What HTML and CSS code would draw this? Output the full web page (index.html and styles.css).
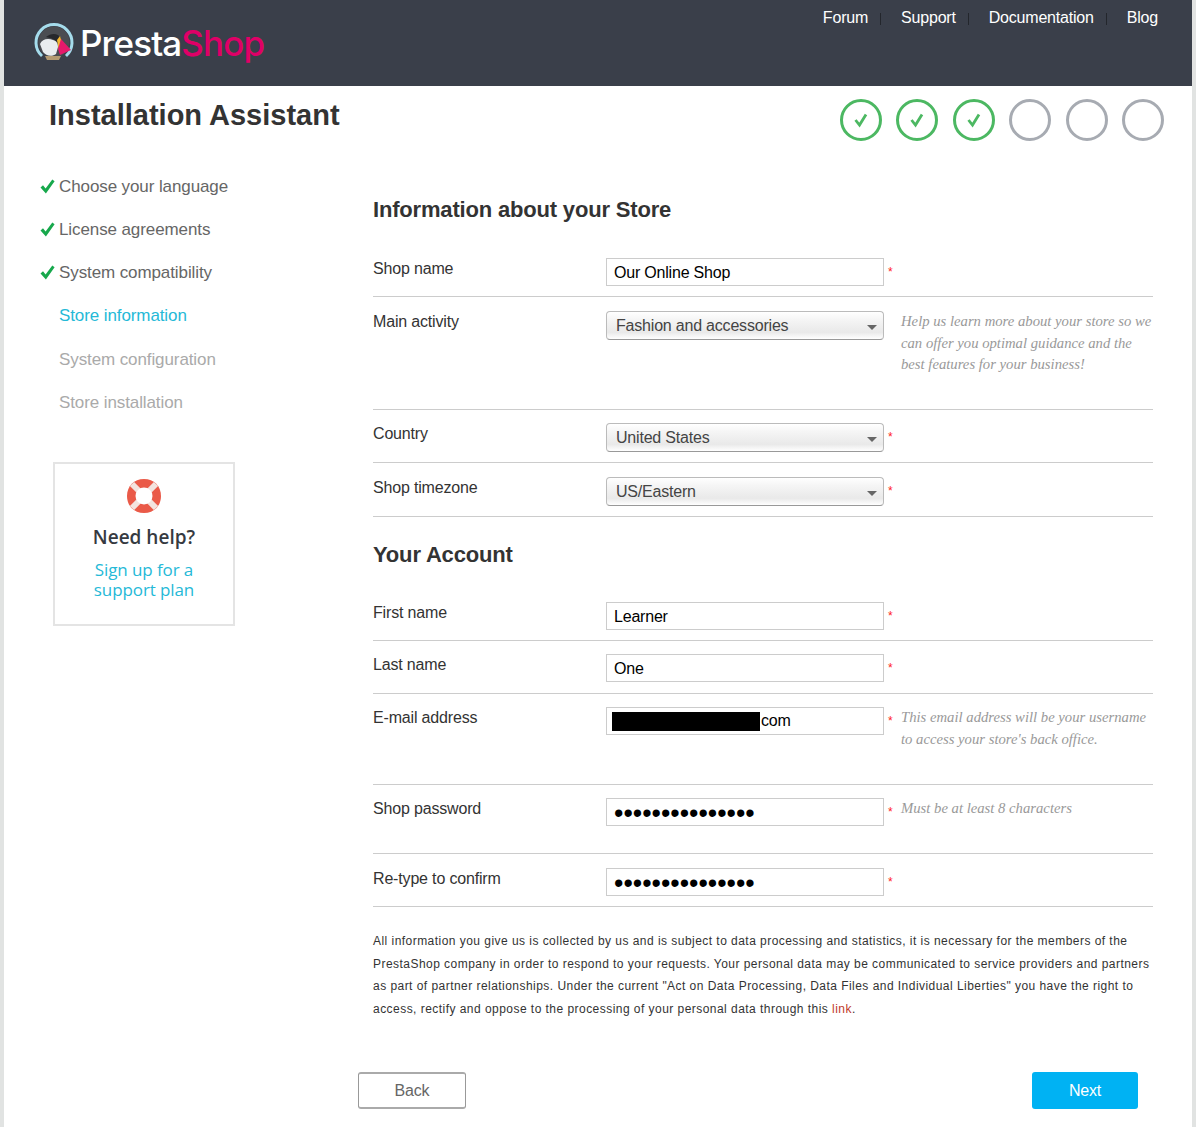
FILE: index.html
```html
<!DOCTYPE html>
<html lang="en">
<head>
<meta charset="utf-8">
<title>PrestaShop Installation Assistant</title>
<link rel="stylesheet" href="styles.css">
</head>
<body>
<div class="page">
  <header class="topbar">
    <a class="logo" href="#">
      <svg class="logo-icon" width="40" height="40" viewBox="0 0 40 40" aria-hidden="true">
        <path d="M8 33 A18 18 0 1 1 32 33" fill="none" stroke="#a5dcec" stroke-width="3"/>
        <circle cx="20" cy="19" r="15.5" fill="#4a4d52"/>
        <path d="M6 21 C8 16 14 15 19 17 C23 18 24 21 24 24 L22 31 C18 34 12 33 9 29 Z" fill="#e9ecef"/>
        <path d="M12 14 C17 10 24 10 27 15 L24 20 C22 17 17 15 12 14 Z" fill="#26282c"/>
        <path d="M23 17 L26 13 L28 20 L25 27 Z" fill="#f2b632"/>
        <path d="M27 16 L37 27 L26 32 L24 26 Z" fill="#e6196b"/>
        <path d="M11 33 H27 L25 37 H13 Z" fill="#b49a72"/>
      </svg>
      <span class="logo-text"><span class="logo-presta">Presta</span><span class="logo-shop">Shop</span></span>
    </a>
    <nav class="topnav">
      <a href="#">Forum</a>
      <a href="#">Support</a>
      <a href="#">Documentation</a>
      <a href="#">Blog</a>
    </nav>
  </header>

  <div class="titlebar">
    <h1>Installation Assistant</h1>
    <div class="steps">
      <span class="step done"><svg width="16" height="16" viewBox="0 0 16 16"><path d="M2.5 8 L6.5 13 L13 2.5" fill="none" stroke="#4cb862" stroke-width="2.8"/></svg></span>
      <span class="step done"><svg width="16" height="16" viewBox="0 0 16 16"><path d="M2.5 8 L6.5 13 L13 2.5" fill="none" stroke="#4cb862" stroke-width="2.8"/></svg></span>
      <span class="step done"><svg width="16" height="16" viewBox="0 0 16 16"><path d="M2.5 8 L6.5 13 L13 2.5" fill="none" stroke="#4cb862" stroke-width="2.8"/></svg></span>
      <span class="step"></span>
      <span class="step"></span>
      <span class="step"></span>
    </div>
  </div>

  <div class="content">
    <aside class="sidebar">
      <ul class="menu">
        <li class="finished"><svg class="tick" width="15" height="15" viewBox="0 0 15 15"><path d="M0.5 8.5 L3 6.3 L5.6 9.4 L12.3 0.5 L14.6 2.2 L5.9 14.6 Z" fill="#17a84c"/></svg>Choose your language</li>
        <li class="finished"><svg class="tick" width="15" height="15" viewBox="0 0 15 15"><path d="M0.5 8.5 L3 6.3 L5.6 9.4 L12.3 0.5 L14.6 2.2 L5.9 14.6 Z" fill="#17a84c"/></svg>License agreements</li>
        <li class="finished"><svg class="tick" width="15" height="15" viewBox="0 0 15 15"><path d="M0.5 8.5 L3 6.3 L5.6 9.4 L12.3 0.5 L14.6 2.2 L5.9 14.6 Z" fill="#17a84c"/></svg>System compatibility</li>
        <li class="current">Store information</li>
        <li class="todo">System configuration</li>
        <li class="todo">Store installation</li>
      </ul>
      <div class="helpbox">
        <svg class="buoy" width="36" height="36" viewBox="0 0 36 36" aria-hidden="true">
          <path d="M18 1 C28 1 35 8 35 18 C35 28 28 35 18 35 C8 35 1 28 1 18 C1 8 8 1 18 1 Z" fill="#ea5a48"/>
          <path d="M6 6 L14 14 M30 6 L22 14 M6 30 L14 22 M30 30 L22 22" stroke="#f3e4df" stroke-width="6"/>
          <circle cx="18" cy="18" r="8.5" fill="#fff"/>
        </svg>
        <div class="help-title">Need help?</div>
        <a class="help-link" href="#">Sign up for a<br>support plan</a>
      </div>
    </aside>

    <main class="main">
      <h2>Information about your Store</h2>
      <div class="row">
        <label>Shop name</label>
        <input class="field" type="text" value="Our Online Shop">
        <span class="req">*</span>
      </div>
      <div class="row row-activity">
        <label>Main activity</label>
        <div class="selectbox"><select><option>Fashion and accessories</option></select></div>
        <span class="req"></span>
        <p class="hint">Help us learn more about your store so we can offer you optimal guidance and the best features for your business!</p>
      </div>
      <div class="row row-tight">
        <label>Country</label>
        <div class="selectbox"><select><option>United States</option></select></div>
        <span class="req">*</span>
      </div>
      <div class="row">
        <label>Shop timezone</label>
        <div class="selectbox"><select><option>US/Eastern</option></select></div>
        <span class="req">*</span>
      </div>

      <h2 class="second">Your Account</h2>
      <div class="row">
        <label>First name</label>
        <input class="field" type="text" value="Learner">
        <span class="req">*</span>
      </div>
      <div class="row row-tight">
        <label>Last name</label>
        <input class="field" type="text" value="One">
        <span class="req">*</span>
      </div>
      <div class="row row-tight row-email">
        <label>E-mail address</label>
        <div class="field field-email"><span class="redact"></span>com</div>
        <span class="req">*</span>
        <p class="hint">This email address will be your username to access your store's back office.</p>
      </div>
      <div class="row row-tight row-pass">
        <label>Shop password</label>
        <input class="field field-pass" type="password" value="aaaaaaaaaaaaaaa">
        <span class="req">*</span>
        <p class="hint">Must be at least 8 characters</p>
      </div>
      <div class="row">
        <label>Re-type to confirm</label>
        <input class="field field-pass" type="password" value="aaaaaaaaaaaaaaa">
        <span class="req">*</span>
      </div>

      <p class="legal">All information you give us is collected by us and is subject to data processing and statistics, it is necessary for the members of the PrestaShop company in order to respond to your requests. Your personal data may be communicated to service providers and partners as part of partner relationships. Under the current "Act on Data Processing, Data Files and Individual Liberties" you have the right to access, rectify and oppose to the processing of your personal data through this <a href="#">link</a>.</p>

      <div class="actions">
        <button class="btn btn-back" type="button">Back</button>
        <button class="btn btn-next" type="button">Next</button>
      </div>
    </main>
  </div>
</div>
</body>
</html>
```

FILE: styles.css
```css
* { box-sizing: border-box; }
html, body { margin: 0; padding: 0; }
body {
  background: #e1e3e2;
  font-family: "Liberation Sans", Arial, sans-serif;
  color: #333;
  height: 1127px;
  overflow: hidden;
}
.page {
  margin: 0 4px;
  height: 1127px;
  background: #fff;
}

/* header */
.topbar {
  height: 86px;
  background: #3a3f4a;
  display: flex;
  justify-content: space-between;
  position: relative;
}
.logo {
  display: flex;
  align-items: center;
  padding: 0 0 0 30px;
  text-decoration: none;
  height: 86px;
}
.logo-icon { flex: none; }
.logo-text {
  font-family: "Inter", sans-serif;
  font-size: 35px;
  font-weight: 500;
  letter-spacing: -0.9px;
  margin-left: 6px;
}
.logo-presta { color: #fff; }
.logo-shop { color: #df0067; }
.topnav {
  display: flex;
  align-items: flex-start;
  padding: 9px 34px 0 0;
}
.topnav a {
  color: #fff;
  font-size: 16px;
  line-height: 18px;
  letter-spacing: -0.2px;
  text-decoration: none;
  padding: 0 13px 0 20px;
  background: linear-gradient(#23262c, #23262c) right 4px / 1px 12px no-repeat;
}
.topnav a:last-child { background: none; padding-right: 0; }

/* title */
.titlebar {
  display: flex;
  justify-content: space-between;
  height: 70px;
  padding: 0 28px 0 45px;
}
h1 {
  margin: 12px 0 0;
  font-size: 29px;
  line-height: 34px;
  font-weight: bold;
  color: #333;
}
.steps {
  display: flex;
  gap: 14.4px;
  padding-top: 13px;
}
.step {
  width: 42px;
  height: 42px;
  border: 3px solid #a7abb2;
  border-radius: 50%;
  display: flex;
  align-items: center;
  justify-content: center;
}
.step.done { border-color: #4cb862; }

/* layout */
.content { display: flex; }
.sidebar { width: 369px; flex: none; padding: 20.8px 0 0 36px; }
.main { width: 780px; flex: none; }

/* menu */
.menu { list-style: none; margin: 0; padding: 0; height: 285.2px; }
.menu li {
  font-size: 17px;
  line-height: 20px;
  letter-spacing: -0.1px;
  height: 43.2px;
  padding-left: 19px;
  color: #666;
  position: relative;
}
.menu .tick { position: absolute; left: 0; top: 2px; }
.menu .current { color: #25b9d7; }
.menu .todo { color: #aaa; }

/* help */
.helpbox {
  margin-left: 13px;
  width: 182px;
  height: 164px;
  border: 2px solid #e4e4e4;
  display: flex;
  flex-direction: column;
  align-items: center;
  padding-top: 14px;
}
.help-title {
  font-family: "Open Sans", sans-serif;
  font-weight: 600;
  font-size: 19px;
  line-height: 24px;
  color: #363a41;
  margin-top: 11px;
}
.help-link {
  font-family: "Open Sans", sans-serif;
  font-size: 17px;
  line-height: 20px;
  letter-spacing: -0.1px;
  color: #25b9d7;
  text-align: center;
  text-decoration: none;
  margin-top: 11px;
}

/* form */
h2 {
  font-size: 22px;
  line-height: 26px;
  font-weight: bold;
  letter-spacing: -0.18px;
  color: #333;
  margin: 41px 0 0;
  padding-bottom: 21px;
}
h2.second { margin-top: 25px; padding-bottom: 20px; }
.row {
  display: flex;
  align-items: flex-start;
  border-bottom: 1px solid #ccc;
  padding: 14px 0 10px;
}
.row-tight { padding-top: 13px; min-height: 53px; }
.row label {
  width: 233px;
  flex: none;
  font-size: 16px;
  line-height: 20px;
  letter-spacing: -0.17px;
  margin-top: 1px;
  color: #333;
}
.row-activity { min-height: 113px; }
.row-email { min-height: 91px; }
.row-pass { min-height: 69px; }
.field {
  width: 278px;
  height: 28px;
  flex: none;
  border: 1px solid #ccc;
  background: #fff;
  padding: 2px 7px 0;
  font-family: "Liberation Sans", Arial, sans-serif;
  font-size: 16px;
  line-height: 24px;
  letter-spacing: -0.2px;
  color: #000;
  border-radius: 0;
  outline: none;
}
.field-email { display: flex; align-items: center; padding: 0 5px; }
.field-pass {
  font-size: 26.8px;
  letter-spacing: 0;
  padding: 2px 7px 0;
  line-height: 24px;
}
.redact { width: 148px; height: 19px; background: #000; margin-right: 1px; flex: none; }
.selectbox {
  width: 278px;
  height: 29px;
  flex: none;
  position: relative;
}
.selectbox::after {
  content: "";
  position: absolute;
  right: 7px;
  top: 14px;
  border-left: 5px solid transparent;
  border-right: 5px solid transparent;
  border-top: 5px solid #666;
}
.selectbox select {
  appearance: none;
  -webkit-appearance: none;
  width: 100%;
  height: 100%;
  border: 1px solid #bbb;
  border-bottom-color: #999;
  border-radius: 4px;
  padding: 0 9px;
  font-family: "Liberation Sans", Arial, sans-serif;
  font-size: 16px;
  letter-spacing: -0.2px;
  color: #444;
  background: linear-gradient(#fff 0%, #f6f6f6 25%, #e9e9e9 75%, #fff 100%);
  outline: none;
}
.req {
  width: 17px;
  flex: none;
  color: #f22;
  font-size: 12px;
  line-height: 14px;
  padding: 7px 0 0 4px;
}
.hint {
  margin: 0;
  flex: 1;
  font-family: "Liberation Serif", serif;
  font-style: italic;
  font-size: 14.7px;
  line-height: 21.5px;
  color: #999;
}
.legal {
  margin: 23px 0 0;
  font-size: 12px;
  line-height: 22.5px;
  color: #333;
  letter-spacing: 0.46px;
}
.legal a { color: #c0392b; text-decoration: none; }

/* actions */
.actions {
  display: flex;
  justify-content: space-between;
  margin: 52px 15px 0 -15px;
}
.btn {
  width: 108px;
  height: 37px;
  font-family: "Liberation Sans", Arial, sans-serif;
  font-size: 16px;
  letter-spacing: -0.2px;
  border-radius: 3px;
  padding: 0;
}
.btn-back {
  background: #fff;
  color: #666;
  border: 1px solid #999;
  border-top: 2px solid #aaa;
  border-bottom: 2px solid #aaa;
}
.btn-next {
  background: #00b2f3;
  color: #fff;
  border: 0;
  width: 106px;
}
```
